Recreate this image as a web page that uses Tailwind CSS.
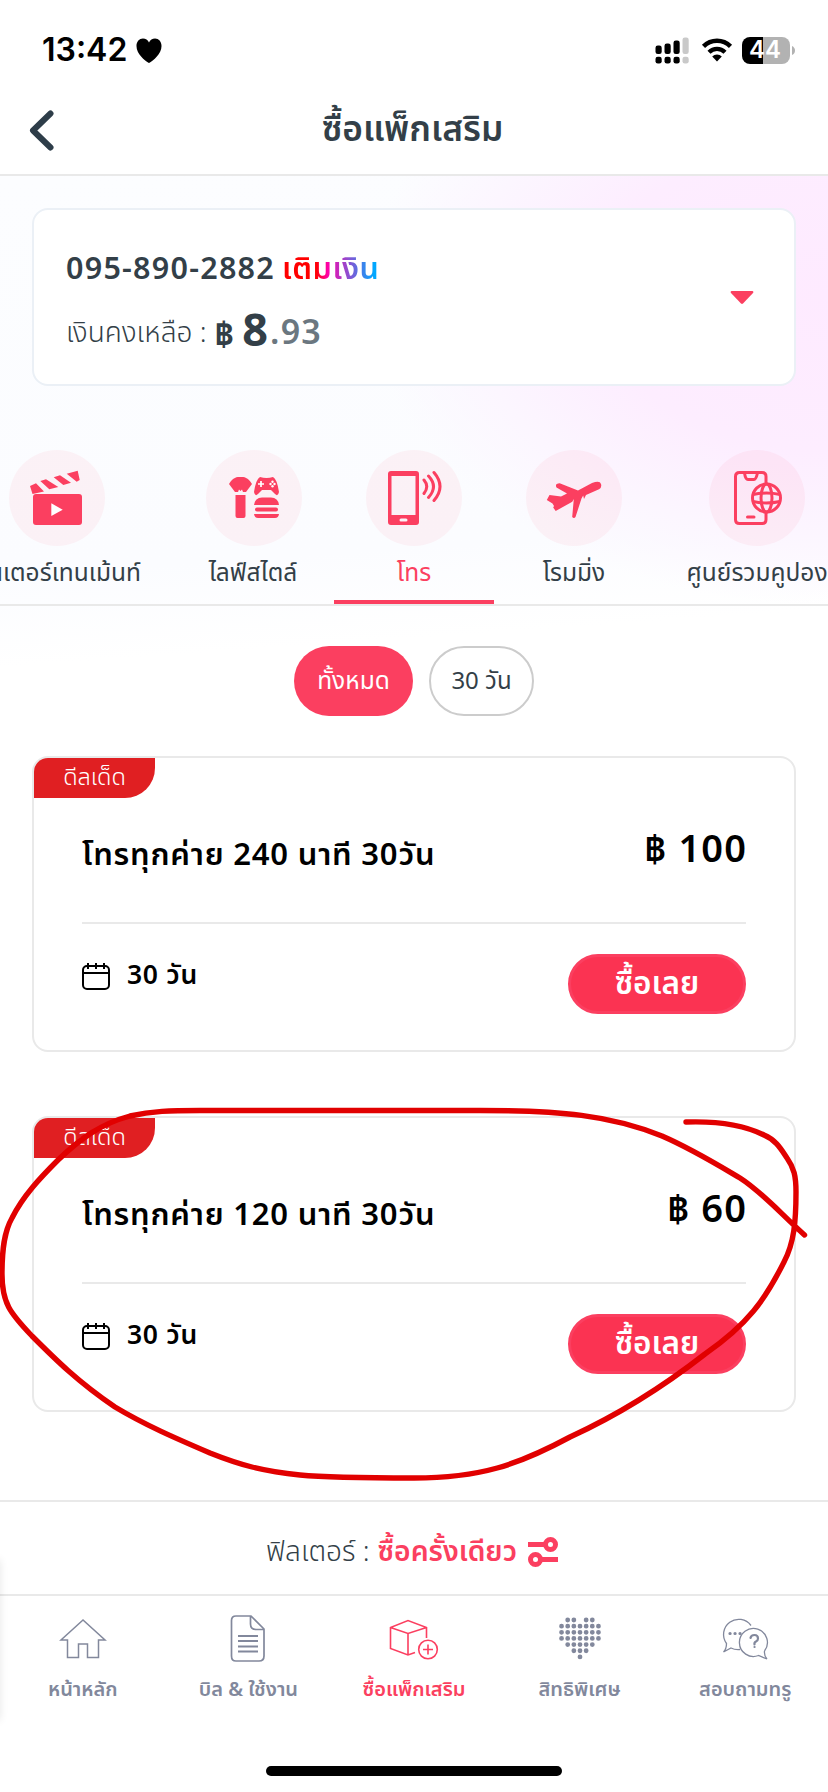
<!DOCTYPE html>
<html lang="th">
<head>
<meta charset="utf-8">
<title>ซื้อแพ็กเสริม</title>
<script src="https://cdn.jsdelivr.net/npm/@tailwindcss/browser@4"></script>
</head>
<body class="bg-white">
<div class="relative flex h-[1792px] w-[828px] flex-col overflow-hidden bg-white font-['Noto_Sans','Noto_Sans_Thai',sans-serif] text-[#333f48] whitespace-nowrap">

  <!-- Status bar -->
  <div class="flex h-[100px] shrink-0 items-center justify-between pl-[42px] pr-[33px]">
    <div class="flex items-center gap-[9px] font-['Inter',sans-serif] text-[32px] font-semibold leading-[100px] text-black">
      <span>13:42</span>
      <svg class="h-[25px] w-[26px]" viewBox="0 0 27 25" preserveAspectRatio="none"><path d="M13.5 25C9 22.5 0.5 16 0.5 8C0.5 3.500 3.500 0.500 7.200 0.500C10 0.500 12.300 2 13.500 4.500C14.700 2 17 0.500 19.800 0.500C23.500 0.500 26.500 3.500 26.500 8C26.500 16 18 22.500 13.500 25Z" fill="#000"/></svg>
    </div>
    <div class="flex items-center">
      <svg class="mr-[12px] h-[27px] w-[34px]" viewBox="0 0 34 27">
        <g fill="#000"><rect x="0.500" y="8.500" width="6.200" height="8.500" rx="2.300"/><rect x="9.500" y="6.500" width="6.200" height="10.500" rx="2.300"/><rect x="18.500" y="3.500" width="6.200" height="13.500" rx="2.300"/><rect x="0.500" y="19.800" width="6.200" height="6.700" rx="2.300"/><rect x="9.500" y="19.800" width="6.200" height="6.700" rx="2.300"/><rect x="18.500" y="19.800" width="6.200" height="6.700" rx="2.300"/></g>
        <g fill="#c9c9c9"><rect x="27.500" y="0.500" width="6.200" height="16.500" rx="2.300"/><rect x="27.500" y="19.800" width="6.200" height="6.700" rx="2.300"/></g>
      </svg>
      <svg class="mr-[9px] h-[24px] w-[32px]" viewBox="0 0 32 24">
        <path d="M2.500 8.300A19.300 19.300 0 0 1 29.500 8.300" fill="none" stroke="#000" stroke-width="4.500"/>
        <path d="M8 14.200A11.300 11.300 0 0 1 24 14.200" fill="none" stroke="#000" stroke-width="4.300"/>
        <path d="M16 23.500L11.200 18.600A6.800 6.800 0 0 1 20.800 18.600Z" fill="#000"/>
      </svg>
      <div class="flex h-[27px] w-[48px] items-center justify-center overflow-hidden rounded-[8px] bg-[linear-gradient(90deg,#000_44%,#b2b2b2_44%)] pr-[2px] font-['Inter',sans-serif] text-[24px] font-semibold text-white">44</div>
      <svg class="ml-[2px] h-[9px] w-[3px]" viewBox="0 0 3 9"><path d="M0 0Q3 1.500 3 4.500T0 9Z" fill="#b2b2b2"/></svg>
    </div>
  </div>

  <!-- Title bar -->
  <header class="grid h-[76px] shrink-0 grid-cols-[80px_1fr_80px] border-b-2 border-[#e9e9e9]">
    <svg class="mt-[10px] ml-[28px] h-[41px] w-[28px]" viewBox="0 0 28 41"><path d="M22.500 3.500L5 20.500L22.500 37.500" fill="none" stroke="#2e3d49" stroke-width="6" stroke-linecap="round" stroke-linejoin="round"/></svg>
    <h1 class="pr-[3px] text-center text-[35.300px] font-semibold leading-[54px]">ซื้อแพ็กเสริม</h1>
  </header>

  <main class="flex h-[1324px] shrink-0 flex-col bg-[radial-gradient(ellipse_460px_310px_at_100%_9%,#feeaff_0%,#fdedff_50%,#fcf6ff_78%,transparent_100%),linear-gradient(176deg,#fcfdff_0%,#fbfcff_400px,#ffffff_490px)] bg-no-repeat">
    <!-- Account -->
    <section class="mx-8 mt-8 flex h-[178px] shrink-0 items-center justify-between rounded-2xl border-2 border-[#ebf0f6] bg-white pr-10 pl-8">
      <div class="flex h-full flex-col">
        <div class="mt-[32px] flex h-[50px] items-center text-[30.500px] font-semibold leading-[50px]">
          <span class="mr-[7px] tracking-[1.250px]">095-890-2882</span>
          <span class="bg-[linear-gradient(90deg,#ff0000_35%,#ff00a8_47%,#8e4fd0_68%,#00a8ff_95%)] bg-clip-text tracking-[0.600px] text-transparent">เติมเงิน</span>
        </div>
        <div class="mt-[3px] flex h-[60px] items-baseline leading-[60px]">
          <span class="mr-[8px] text-[28px] font-light">เงินคงเหลือ :</span>
          <span class="mr-[8px] translate-y-1 text-[34px] font-bold">฿</span>
          <span class="mr-[2px] translate-y-1 text-[45px] font-bold">8</span>
          <span class="translate-y-[2px] text-[34px] font-semibold tracking-[1.200px] text-[#6b7780]">.93</span>
        </div>
      </div>
      <svg class="h-[13px] w-[24px]" viewBox="0 0 24 13"><path d="M1.500 0H22.500Q24 0.500 23 2L13 12.500Q12 13.300 11 12.500L1 2Q0 0.500 1.500 0Z" fill="#fb3f60"/></svg>
    </section>

    <!-- Categories -->
    <nav class="-ml-[60px] mt-[64px] flex h-[156px] w-[920px] shrink-0 border-b-2 border-[#e9e9e9] text-[24.500px]">
      <div class="flex w-[234px] flex-col items-center">
        <div class="flex size-24 shrink-0 items-center justify-center rounded-full bg-[#fb3f60]/6">
          <svg class="size-[56px]" viewBox="0 0 56 56" fill="#fb3f60"><rect x="4" y="24" width="49" height="31" rx="3"/><path d="M1 16L7 13.300L15 21.500L3.500 24ZM11.300 11L17 9.300L29.300 17L20.300 19.300ZM24.700 7.300L31 5.300L42 12.700L34.300 15ZM37.700 3.700L48.700 0.700L50.700 10L47.700 11.700Z"/><path d="M22.300 33.300V46L33.700 39.700Z" fill="#fff"/></svg>
        </div>
        <span class="mt-[4px] mr-[6px] leading-[44px]">เอนเตอร์เทนเม้นท์</span>
      </div>
      <div class="flex w-[160px] flex-col items-center">
        <div class="flex size-24 shrink-0 items-center justify-center rounded-full bg-[#fb3f60]/6">
          <svg class="size-[50px]" viewBox="0 0 50 50" fill="#fb3f60"><path d="M0 11C4 4 8 4 11.500 4S19 4 23 11L17 19H14L13 16.500L11.500 18L10 16.500L9 19H6ZM6.500 22H16.500V43Q16.500 45 14.500 45H8.500Q6.500 45 6.500 43Z"/><path d="M31 4Q37.500 6 44 4Q48 6 50 19Q49 24 46 21L42 17H33L29 21Q26 24 25 19Q27 6 31 4Z"/><path d="M29 11H35M32 8V14" stroke="#fff" stroke-width="1.700"/><circle cx="41.500" cy="11" r="1.200" fill="#fff"/><circle cx="45.500" cy="11" r="1.200" fill="#fff"/><circle cx="43.500" cy="8.800" r="1.200" fill="#fff"/><circle cx="43.500" cy="13.200" r="1.200" fill="#fff"/><path d="M25 32Q26 24.500 33 24.500H42Q49 24.500 50 32Z"/><rect x="26" y="34.500" width="23" height="4" rx="2"/><path d="M25 41H50Q49.500 45 46 45H29Q25.500 45 25 41Z"/></svg>
        </div>
        <span class="mt-[4px] mr-[2px] leading-[44px]">ไลฟ์สไตล์</span>
      </div>
      <div class="flex w-[160px] flex-col items-center border-b-4 border-[#fb3f60] text-[#fb3f60]">
        <div class="flex size-24 shrink-0 items-center justify-center rounded-full bg-[#fb3f60]/6">
          <svg class="h-[56px] w-[56px]" viewBox="0 0 56 56" fill="none" stroke="#fb3f60"><path fill="#fb3f60" stroke="none" fill-rule="evenodd" d="M5 1H30Q33 1 33 4V52Q33 55 30 55H5Q2 55 2 52V4Q2 1 5 1ZM5.500 6V45H29.500V6ZM15 48.500Q13.500 48.500 13.500 50T15 51.500H20Q21.500 51.500 21.500 50T20 48.500Z"/><g stroke-width="3" stroke-linecap="round"><path d="M38 10Q43.500 16.500 38 23.500M42.500 6Q52.500 16.500 42.500 27.500M48 2.500Q60 16.500 48 30.500"/></g></svg>
        </div>
        <span class="mt-[4px] leading-[44px]">โทร</span>
      </div>
      <div class="flex w-[160px] flex-col items-center">
        <div class="flex size-24 shrink-0 items-center justify-center rounded-full bg-[#fb3f60]/6">
          <svg class="size-[56px]" viewBox="0 0 56 56" fill="#fb3f60"><path d="M13.700 13.300L32 20.500L46 13Q54 10 55 14Q56 17.500 53 19.300L40 25L38 29L37.200 25.500L35.500 28.500L29.500 47Q28 49 26.200 47L27.800 29L26.300 31.700L9.700 41L7.200 37.500L8 36L6.500 33.500L0.800 30L3.500 25L15 26.500L21 23.500L10.500 17.500Q8.500 13.500 13.700 13.300Z"/></svg>
        </div>
        <span class="mt-[4px] leading-[44px]">โรมมิ่ง</span>
      </div>
      <div class="flex w-[206px] flex-col items-center">
        <div class="flex size-24 shrink-0 items-center justify-center rounded-full bg-[#fb3f60]/6">
          <svg class="size-[56px]" viewBox="0 0 56 56" fill="none" stroke="#fb3f60" stroke-width="3"><path d="M37 13V6.500Q37 2.500 33 2.500H10.500Q6.500 2.500 6.500 6.500V49.500Q6.500 53.500 10.500 53.500H33Q37 53.500 37 49.500V43"/><path d="M15.500 3Q16.500 9.500 19 9.500H25Q27 9.500 28.500 3M18.500 47H25" stroke-linecap="round"/><circle cx="37.500" cy="28" r="14"/><ellipse cx="37.500" cy="28" rx="5.500" ry="14"/><path d="M24 24.500Q37.500 21.500 51 24.500M24 31.500Q37.500 34.500 51 31.500" /></svg>
        </div>
        <span class="mt-[4px] leading-[44px]">ศูนย์รวมคูปอง</span>
      </div>
    </nav>

    <!-- Duration filters -->
    <div class="mt-10 flex h-[70px] shrink-0 justify-center gap-4 text-[24px]">
      <div class="w-[119px] rounded-full bg-[#fb3f60] text-center text-[24.500px] leading-[68px] text-white">ทั้งหมด</div>
      <div class="w-[105px] rounded-full border-2 border-[#cccccc] bg-white text-center leading-[64px]">30 วัน</div>
    </div>

    <!-- Packages -->
    <article class="mx-8 mt-10 flex h-[296px] shrink-0 flex-col overflow-hidden rounded-2xl border-2 border-[#e9e9e9] bg-white text-black">
      <div class="h-10 w-[121px] rounded-br-[30px] bg-[#e01f22] text-center text-[23.500px] font-light leading-[36px] text-white">ดีลเด็ด</div>
      <div class="mx-12 flex h-[126px] shrink-0 justify-between border-b-2 border-[#e9e9e9] font-semibold">
        <h2 class="mt-[30px] text-[31px] leading-[50px] tracking-[0.800px]">โทรทุกค่าย 240 นาที 30วัน</h2>
        <span class="-mr-[1px] mt-[24px] text-[38px] leading-[50px] tracking-[1.100px]">฿ 100</span>
      </div>
      <div class="mx-12 flex justify-between">
        <div class="mt-[31px] flex h-[42px] items-center gap-[17px] text-[26.500px] font-semibold">
          <svg class="h-[28px] w-[28px]" viewBox="0 0 28 28" fill="none" stroke="#000" stroke-width="2"><rect x="1" y="4" width="26" height="23" rx="4"/><path d="M1 11H27M6 1V7M14 1V7M22 1V7"/></svg>
          <span class="-mt-[2px] tracking-[0.700px]">30 วัน</span>
        </div>
        <div class="mt-[30px] h-[60px] w-[178px] rounded-full border-3 border-[#fb3f60] bg-[#fb3352] text-center text-[31.500px] font-semibold leading-[50px] text-white">ซื้อเลย</div>
      </div>
    </article>

    <article class="mx-8 mt-16 flex h-[296px] shrink-0 flex-col overflow-hidden rounded-2xl border-2 border-[#e9e9e9] bg-white text-black">
      <div class="h-10 w-[121px] rounded-br-[30px] bg-[#e01f22] text-center text-[23.500px] font-light leading-[36px] text-white">ดีลเด็ด</div>
      <div class="mx-12 flex h-[126px] shrink-0 justify-between border-b-2 border-[#e9e9e9] font-semibold">
        <h2 class="mt-[30px] text-[31px] leading-[50px] tracking-[0.800px]">โทรทุกค่าย 120 นาที 30วัน</h2>
        <span class="-mr-[1px] mt-[24px] text-[38px] leading-[50px] tracking-[1.100px]">฿ 60</span>
      </div>
      <div class="mx-12 flex justify-between">
        <div class="mt-[31px] flex h-[42px] items-center gap-[17px] text-[26.500px] font-semibold">
          <svg class="h-[28px] w-[28px]" viewBox="0 0 28 28" fill="none" stroke="#000" stroke-width="2"><rect x="1" y="4" width="26" height="23" rx="4"/><path d="M1 11H27M6 1V7M14 1V7M22 1V7"/></svg>
          <span class="-mt-[2px] tracking-[0.700px]">30 วัน</span>
        </div>
        <div class="mt-[30px] h-[60px] w-[178px] rounded-full border-3 border-[#fb3f60] bg-[#fb3352] text-center text-[31.500px] font-semibold leading-[50px] text-white">ซื้อเลย</div>
      </div>
    </article>
  </main>

  <!-- Filter bar -->
  <div class="flex h-[96px] shrink-0 items-center justify-center border-y-2 border-[#e9e9e9] pt-1 pr-1 text-[28px]">
    <span class="mr-[8px] font-light">ฟิลเตอร์ :</span>
    <span class="mr-[11px] text-[28.300px] font-semibold text-[#fb3f60]">ซื้อครั้งเดียว</span>
    <svg class="mt-1 h-[30px] w-[30px]" viewBox="0 0 30 30" fill="none" stroke="#fb3f60" stroke-width="5"><circle cx="22.500" cy="7.500" r="5"/><circle cx="7.500" cy="22.500" r="5"/><path d="M0 7.500H17M13 22.500H30"/></svg>
  </div>

  <!-- Bottom navigation -->
  <footer class="flex grow flex-col items-center justify-between bg-white pb-4">
    <div class="grid w-full grid-cols-5 text-[20px] font-semibold text-[#82889c]">
      <div class="flex flex-col items-center">
        <svg class="mt-[19px] h-[48px] w-[48px]" viewBox="0 0 48 48" fill="none" stroke="currentColor" stroke-width="1.500"><path d="M24 5L2 25H8.500V42.500H19.500V29H28.500V42.500H39.500V25H46Z"/></svg>
        <span class="mt-[8px] leading-[36px]">หน้าหลัก</span>
      </div>
      <div class="flex flex-col items-center">
        <svg class="mt-[19px] h-[48px] w-[36px]" viewBox="0 0 36 48" fill="none" stroke="currentColor" stroke-width="1.700"><path d="M6 1H21L34 14V41Q34 46 29 46H6Q1.500 46 1.500 41V5.500Q1.500 1 6 1ZM20.500 1V9Q20.500 14.500 26 14.500H34"/><path d="M8 21H28M8 26H28M8 31.500H28M8 36.500H28" stroke-width="2"/></svg>
        <span class="mt-[8px] leading-[36px]">บิล &amp; ใช้งาน</span>
      </div>
      <div class="flex flex-col items-center text-[#fb3f60]">
        <svg class="mt-[19px] h-[48px] w-[50px]" viewBox="0 0 50 48" fill="none" stroke="currentColor" stroke-width="1.600"><path d="M37.500 23V12.500L19 5.500L1.500 12.500V33.500L19 40L26 37.500M1.500 12.500L19 18.500L37.500 12.500M19 18.500V40"/><circle cx="39" cy="34.500" r="9.300"/><path d="M34 34.500H44M39 29.500V39.500"/></svg>
        <span class="mt-[8px] leading-[36px]">ซื้อแพ็กเสริม</span>
      </div>
      <div class="flex flex-col items-center">
        <svg class="mt-[19px] h-[48px] w-[44px]" viewBox="0 0 44 48" fill="none" stroke="currentColor" stroke-width="4.800" stroke-linecap="round"><path stroke-dasharray="0 6.150" d="M9.700 5H16M28.150 5H34.400M3.550 11.150H41M3.550 17.300H41M3.550 23.450H41M9.700 29.600H34.500M15.850 35.750H28.300M22 41.900H22.100"/></svg>
        <span class="mt-[8px] leading-[36px]">สิทธิพิเศษ</span>
      </div>
      <div class="flex flex-col items-center">
        <svg class="mt-[19px] h-[48px] w-[50px]" viewBox="0 0 50 48" fill="none" stroke="currentColor" stroke-width="1.300"><path d="M31 10.500A15.200 15.200 0 1 0 6.500 28.500Q6.500 34 3.500 37L11 33Q15 35 20 34.500"/><path d="M44.500 36A14 14 0 1 0 38.500 40.500L47 44Q44 41 44.500 36"/><path d="M10 18.500H10.100M15 18.500H15.100M20 18.500H20.100" stroke-width="3.200" stroke-linecap="round"/><path d="M30.500 23Q31 20 34.500 20T38 23.500Q38 25.500 36 26.500T34.500 29.500M34.500 32H34.600" stroke-width="2.200" stroke-linecap="round"/></svg>
        <span class="mt-[8px] leading-[36px]">สอบถามทรู</span>
      </div>
    </div>
    <div class="h-[10px] w-[296px] rounded-full bg-black"></div>
  </footer>

  <!-- Shadow along the left edge of the navigation -->
  <div class="absolute top-[1560px] -left-[8px] h-[160px] w-[8px] shadow-[0_0_8px_rgba(0,0,0,0.10)]"></div>

  <!-- Hand-drawn marker loop -->
  <svg class="pointer-events-none absolute top-0 left-0 h-[1792px] w-[828px]" viewBox="0 0 828 1792" fill="none" stroke="#e10000" stroke-width="5.400" stroke-linecap="round" stroke-linejoin="round">
    <path d="M686 1122C715 1121 742 1124 764 1135C776 1140 781 1149 787 1158C794 1168 796 1176 796 1192C796 1222 794 1243 784 1262C765 1300 748 1324 705 1354C664 1386 618 1415 570 1437C518 1465 480 1478 414 1478C370 1478 330 1478 300 1475C262 1471 240 1465 210 1453C175 1438 145 1425 115 1407C78 1382 55 1359 32 1336C10 1313 2 1303 2 1274C2 1250 4 1232 12 1218C23 1196 40 1178 58 1160C80 1139 100 1124 130 1116C152 1111 170 1110.500 200 1110.500H480C560 1110.500 610 1115 662 1136C692 1149 718 1165 740 1178C762 1192 780 1213 804.500 1235"/>
  </svg>
</div>
</body>
</html>
